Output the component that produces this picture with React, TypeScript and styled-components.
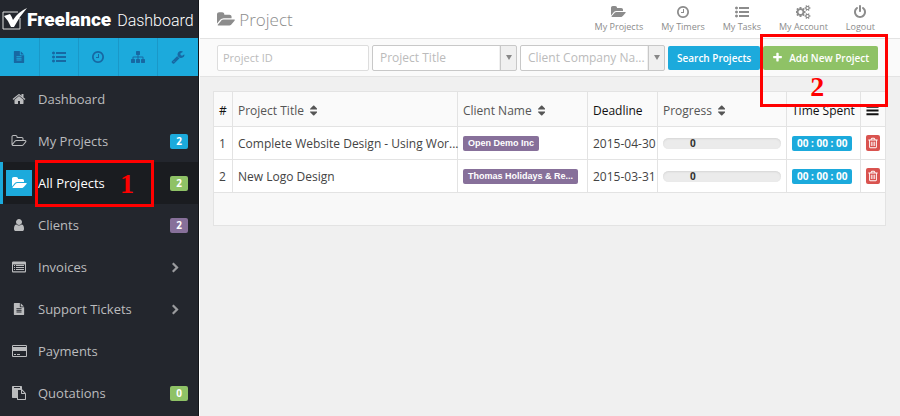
import React from "react";
import styled, { createGlobalStyle } from "styled-components";

const blue = "#1caadc";
const green = "#8fc266";
const purple = "#87709a";
const red = "#d9534f";

const GlobalStyle = createGlobalStyle`
  * { box-sizing: border-box; }
  body {
    margin: 0;
    background: #f0f0f0;
    font-family: "Open Sans", "Noto Sans", sans-serif;
    font-size: 13px;
    color: #444;
  }
  button, input, select { font-family: inherit; margin: 0; }
`;

/* ---------- icons ---------- */

const dot = (y: number) =>
  `M384 ${y}q0 80-56 136t-136 56-136-56-56-136 56-136 136-56 136 56 56 136z`;
const dash = (y: number) =>
  `M1792 ${y}v192q0 13-9.5 22.5t-22.5 9.5h-1216q-13 0-22.5-9.5t-9.5-22.5v-192q0-13 9.5-22.5t22.5-9.5h1216q13 0 22.5 9.5t9.5 22.5z`;
const fileLine = (y: number) =>
  `M1280 ${y}v-64q0-14-9-23t-23-9h-704q-14 0-23 9t-9 23v64q0 14 9 23t23 9h704q14 0 23-9t9-23z`;
const smallCog = (y: number) =>
  `M1600 ${y + 70}q0-52-38-90t-90-38-90 38-38 90q0 53 37.5 90.5t90.5 37.5 90.5-37.5 37.5-90.5zM1856 ${y}v140q0 16-149 31-12 27-30 52 51 113 51 138 0 4-4 7-122 71-124 71-8 0-46-47t-52-68q-20 2-30 2t-30-2q-14 21-52 68t-46 47q-2 0-124-71-4-3-4-7 0-25 51-138-18-25-30-52-149-15-149-31v-140q0-16 149-31 13-29 30-52-51-113-51-138 0-4 4-7 4-2 35-20t59-34 30-16q8 0 46 46.5t52 67.5q20-2 30-2t30 2q51-71 92-112l6-2q4 0 124 70 4 3 4 7 0 25-51 138 17 23 30 52 149 15 149 31z`;
const bin = (x: number) =>
  `M${x} 736v576q0 14-9 23t-23 9h-64q-14 0-23-9t-9-23v-576q0-14 9-23t23-9h64q14 0 23 9t9 23z`;

const icons = {
  file: {
    w: 1792,
    d:
      "M1596 476q14 14 28 36h-472v-472q22 14 36 28zM1120 640h544v1056q0 40-28 68t-68 28h-1344q-40 0-68-28t-28-68v-1600q0-40 28-68t68-28h800v544q0 40 28 68t68 28z" +
      fileLine(1376) + fileLine(1120) + fileLine(864),
  },
  list: { w: 1792, d: dot(1408) + dot(896) + dot(384) + dash(1312) + dash(800) + dash(288) },
  clock: {
    w: 1792,
    d: "M1024 544v448q0 14-9 23t-23 9h-320q-14 0-23-9t-9-23v-64q0-14 9-23t23-9h224v-352q0-14 9-23t23-9h64q14 0 23 9t9 23zm416 352q0-148-73-273t-198-198-273-73-273 73-198 198-73 273 73 273 198 198 273 73 273-73 198-198 73-273zm224 0q0 209-103 385.5t-279.5 279.5-385.5 103-385.5-103-279.5-279.5-103-385.5 103-385.5 279.5-279.5 385.5-103 385.5 103 279.5 279.5 103 385.5z",
  },
  sitemap: {
    w: 1792,
    d: "M1792 1248v320q0 40-28 68t-68 28h-320q-40 0-68-28t-28-68v-320q0-40 28-68t68-28h96v-192h-512v192h96q40 0 68 28t28 68v320q0 40-28 68t-68 28h-320q-40 0-68-28t-28-68v-320q0-40 28-68t68-28h96v-192h-512v192h96q40 0 68 28t28 68v320q0 40-28 68t-68 28h-320q-40 0-68-28t-28-68v-320q0-40 28-68t68-28h96v-192q0-52 38-90t90-38h512v-192h-96q-40 0-68-28t-28-68v-320q0-40 28-68t68-28h320q40 0 68 28t28 68v320q0 40-28 68t-68 28h-96v192h512q52 0 90 38t38 90v192h96q40 0 68 28t28 68z",
  },
  wrench: {
    w: 1792,
    d: "M448 1472q0-26-19-45t-45-19-45 19-19 45 19 45 45 19 45-19 19-45zm644-420l-682 682q-37 37-90 37-52 0-91-37l-106-108q-38-36-38-90 0-53 38-91l681-681q39 98 114.5 173.5t173.5 114.5zm634-435q0 39-23 106-47 134-164.5 217.5t-258.5 83.5q-185 0-316.5-131.5t-131.5-316.5 131.5-316.5 316.5-131.5q58 0 121.5 16.5t107.5 46.5q16 11 16 28t-16 28l-293 169v224l193 107q5-3 79-48.5t135.5-81 70.5-35.5q15 0 23.5 10t8.5 25z",
  },
  home: {
    w: 1792,
    d: "M1472 992v480q0 26-19 45t-45 19h-384v-384h-256v384h-384q-26 0-45-19t-19-45v-480q0-1 .5-3t.5-3l575-474 575 474q1 2 1 6zm223-69l-62 74q-8 9-21 11h-3q-13 0-21-7l-692-577-692 577q-12 8-24 7-13-2-21-11l-62-74q-8-10-7-23.5t11-21.5l719-599q32-26 76-26t76 26l244 204v-195q0-14 9-23t23-9h192q14 0 23 9t9 23v408l219 182q10 8 11 21.5t-7 23.5z",
  },
  folder: {
    w: 1920,
    d: "M1879 952q0 31-31 66l-336 396q-43 51-120.5 86.5t-143.5 35.5h-1088q-34 0-60.5-13t-26.5-43q0-31 31-66l336-396q43-51 120.5-86.5t143.5-35.5h1088q34 0 60.5 13t26.5 43zm-343-344v160h-832q-94 0-197 47.5t-164 119.5l-337 396-5 6q0-4-.5-12.5t-.5-12.5v-960q0-92 66-158t158-66h320q92 0 158 66t66 158v32h544q92 0 158 66t66 158z",
  },
  folderOutline: {
    w: 1984,
    d: "M1845 931q0-35-53-35h-1088q-40 0-85.5 21.5t-71.5 52.5l-294 363q-18 24-18 40 0 35 53 35h1088q40 0 86-22t71-53l294-363q18-22 18-39zm-1141-163h768v-160q0-40-28-68t-68-28h-576q-40 0-68-28t-28-68v-64q0-40-28-68t-68-28h-320q-40 0-68 28t-28 68v853l256-315q44-53 116-87.5t140-34.5zm1269 163q0 62-46 120l-295 363q-43 53-116 87.5t-140 34.5h-1088q-92 0-158-66t-66-158v-960q0-92 66-158t158-66h320q92 0 158 66t66 158v32h544q92 0 158 66t66 158v160h192q54 0 99 24.5t67 70.5q15 32 15 68z",
  },
  user: {
    w: 1792,
    d: "M1536 1399q0 109-62.5 187t-150.5 78h-854q-88 0-150.5-78t-62.5-187q0-85 8.5-160.5t31.5-152 58.5-131 94-89 134.5-34.5q131 128 313 128t313-128q76 0 134.5 34.5t94 89 58.5 131 31.5 152 8.5 160.5zm-256-887q0 159-112.5 271.5t-271.5 112.5-271.5-112.5-112.5-271.5 112.5-271.5 271.5-112.5 271.5 112.5 112.5 271.5z",
  },
  listBox: {
    w: 1792,
    d: "M160 192h1472q66 0 113 47t47 113v1088q0 66-47 113t-113 47h-1472q-66 0-113-47t-47-113v-1088q0-66 47-113t113-47zM128 576v832q0 32 32 32h1472q32 0 32-32v-832zM256 640h128v128h-128zM512 640h1024v128h-1024zM256 896h128v128h-128zM512 896h1024v128h-1024zM256 1152h128v128h-128zM512 1152h1024v128h-1024z",
  },
  card: {
    w: 1920,
    d: "M160 128h1600q66 0 113 47t47 113v1216q0 66-47 113t-113 47h-1600q-66 0-113-47t-47-113v-1216q0-66 47-113t113-47zM160 256q-32 0-32 32v96h1664v-96q0-32-32-32zM1760 1536q32 0 32-32v-608h-1664v608q0 32 32 32zM256 1408v-128h256v128h-256zM640 1408v-128h384v128h-384z",
  },
  paste: {
    w: 1792,
    d: "M768 1664h896v-640h-416q-40 0-68-28t-28-68v-416h-384v1152zm256-1440v-64q0-13-9.5-22.5t-22.5-9.5h-704q-13 0-22.5 9.5t-9.5 22.5v64q0 13 9.5 22.5t22.5 9.5h704q13 0 22.5-9.5t9.5-22.5zm256 672h299l-299-299v299zm512 128v672q0 40-28 68t-68 28h-960q-40 0-68-28t-28-68v-160h-544q-40 0-68-28t-28-68v-1344q0-40 28-68t68-28h1088q40 0 68 28t28 68v328q21 13 36 28l408 408q28 28 48 76t20 88z",
  },
  chevron: {
    w: 1792,
    d: "M1363 941l-742 742q-19 19-45 19t-45-19l-166-166q-19-19-19-45t19-45l531-531-531-531q-19-19-19-45t19-45l166-166q19-19 45-19t45 19l742 742q19 19 19 45t-19 45z",
  },
  cogs: {
    w: 1920,
    d:
      "M832 896q0-106-75-181t-181-75-181 75-75 181 75 181 181 75 181-75 75-181zM1216 805v185q0 10-7 19.5t-16 10.5l-155 24q-11 35-32 76 34 48 90 115 7 11 7 20 0 12-7 19-23 30-82.5 89.5t-78.5 59.5q-11 0-21-7l-115-90q-37 19-77 31-11 108-23 155-7 24-30 24h-186q-11 0-20-7.5t-10-17.5l-23-153q-34-10-75-31l-118 89q-7 7-20 7-11 0-21-8-144-133-144-160 0-9 7-19 10-14 41-53t47-61q-23-44-35-82l-152-24q-10-1-17-9.5t-7-19.5v-185q0-10 7-19.5t16-10.5l155-24q11-35 32-76-34-48-90-115-7-11-7-20 0-12 7-20 22-30 82-89t79-59q11 0 21 7l115 90q34-18 77-32 11-108 23-154 7-24 30-24h186q11 0 20 7.5t10 17.5l23 153q34 10 75 31l118-89q8-7 20-7 11 0 21 8 144 133 144 160 0 8-7 19-12 16-42 54t-45 60q23 48 34 82l152 23q10 2 17 10.5t7 19.5z" +
      smallCog(1338) + smallCog(314),
  },
  power: {
    w: 1792,
    d: "M1664 896q0 156-61 298t-164 245-245 164-298 61-298-61-245-164-164-245-61-298q0-182 80.5-343t226.5-270q43-32 95.5-25t83.5 50q32 42 24.5 94.5t-49.5 84.5q-98 74-151.5 181t-53.5 228q0 104 40.5 198.5t109.5 163.5 163.5 109.5 198.5 40.5 198.5-40.5 163.5-109.5 109.5-163.5 40.5-198.5q0-121-53.5-228t-151.5-181q-42-32-49.5-84.5t24.5-94.5q31-43 84-50t95 25q146 109 226.5 270t80.5 343zm-640-768v640q0 52-38 90t-90 38-90-38-38-90v-640q0-52 38-90t90-38 90 38 38 90z",
  },
  trash: {
    w: 1792,
    d:
      bin(704) + bin(960) + bin(1216) +
      "M1344 1460v-948h-896v948q0 22 7 40.5t14.5 27 10.5 8.5h832q3 0 10.5-8.5t14.5-27 7-40.5zM672 384h448l-48-117q-7-9-17-11h-317q-10 2-17 11zM1600 416v64q0 14-9 23t-23 9h-96v948q0 83-47 143.5t-113 60.5h-832q-66 0-113-58.5t-47-141.5v-952h-96q-14 0-23-9t-9-23v-64q0-14 9-23t23-9h309l70-167q15-37 54-63t79-26h320q40 0 79 26t54 63l70 167h309q14 0 23 9t9 23z",
  },
  plus: {
    w: 1792,
    d: "M1600 736v192q0 40-28 68t-68 28h-416v416q0 40-28 68t-68 28h-192q-40 0-68-28t-28-68v-416h-416q-40 0-68-28t-28-68v-192q0-40 28-68t68-28h416v-416q0-40 28-68t68-28h192q40 0 68 28t28 68v416h416q40 0 68 28t28 68z",
  },
  bars: { w: 1792, d: "M64 256h1664v256h-1664zM64 768h1664v256h-1664zM64 1280h1664v256h-1664z" },
  sort: {
    w: 1024,
    d: "M1024 1088q0 26-19 45l-448 448q-19 19-45 19t-45-19l-448-448q-19-19-19-45t19-45 45-19h896q26 0 45 19t19 45zm0-384q0 26-19 45t-45 19h-896q-26 0-45-19t-19-45 19-45l448-448q19-19 45-19t45 19l448 448q19 19 19 45z",
  },
};

type IconName = keyof typeof icons;

const Svg = styled.svg<{ $size: number }>`
  display: block;
  flex: none;
  height: ${(p) => p.$size}px;
  fill: currentColor;
  fill-rule: evenodd;
`;

const Icon = ({ name, size = 14 }: { name: IconName; size?: number }) => (
  <Svg $size={size} viewBox={`0 0 ${icons[name].w} 1792`} aria-hidden="true">
    <path d={icons[name].d} />
  </Svg>
);

/* ---------- layout ---------- */

const Page = styled.div`
  display: grid;
  grid-template-columns: 200px minmax(0, 1fr);
  min-height: 100vh;
`;

const Sidebar = styled.aside`
  background: #23262d;
  border-right: 1px solid #fff;
  box-shadow: inset -1px 0 #14161a;
`;

const Logo = styled.a`
  display: flex;
  align-items: center;
  height: 38px;
  padding-left: 1px;
  color: #fff;
  text-decoration: none;
  white-space: nowrap;
`;

const LogoMark = styled.svg`
  flex: none;
  width: 26px;
  height: 24px;
`;

const LogoText = styled.span`
  display: flex;
  align-items: baseline;
  gap: 6px;
  font-family: Roboto, "Liberation Sans", sans-serif;
  font-size: 16px;
`;

const LogoBold = styled.strong`
  font-size: 19px;
  font-weight: 900;
`;

const LogoLight = styled.span`
  font-weight: 300;
`;

const QuickBar = styled.nav`
  display: grid;
  grid-template-columns: repeat(5, 1fr);
  height: 38px;
  margin-right: 1px;
  background: ${blue};
`;

const QuickLink = styled.a`
  display: flex;
  align-items: center;
  justify-content: center;
  color: #1768a3;
  border-right: 1px solid #1a98c8;
  &:last-child { border-right: 0; }
`;

const NavList = styled.ul`
  list-style: none;
  margin: 0;
  padding: 2px 0 0;
`;

const NavItem = styled.li`
  position: relative;
`;

const NavLink = styled.a<{ $active?: boolean }>`
  display: flex;
  align-items: center;
  height: 42px;
  padding: 0 10px 0 3px;
  gap: 6px;
  border-left: 3px solid ${(p) => (p.$active ? blue : "transparent")};
  background: ${(p) => (p.$active ? "#1a1c20" : "transparent")};
  color: ${(p) => (p.$active ? "#fff" : "#bbbcbe")};
  text-decoration: none;
  margin-right: 1px;
`;

const NavIcon = styled.span<{ $active?: boolean }>`
  display: flex;
  align-items: center;
  justify-content: center;
  width: 26px;
  height: 26px;
  background: ${(p) => (p.$active ? blue : "transparent")};
`;

const NavText = styled.span`
  flex: 1;
`;

const NavBadge = styled.span<{ $color: string }>`
  width: 18px;
  border-radius: 2px;
  background: ${(p) => p.$color};
  color: #fff;
  font-size: 10px;
  font-weight: 700;
  line-height: 15px;
  text-align: center;
`;

const NavArrow = styled.span`
  width: 18px;
  color: #9a9b9e;
`;

const Main = styled.main`
  min-width: 0;
`;

const Header = styled.header`
  display: flex;
  align-items: center;
  justify-content: space-between;
  height: 38px;
  padding: 0 25px 0 17px;
  background: #fff;
`;

const Title = styled.h1`
  display: flex;
  align-items: center;
  gap: 4px;
  margin: 0;
  color: #8c8c8c;
  font-size: 17px;
  font-weight: 300;
`;

const TopNav = styled.nav`
  display: flex;
  gap: 18px;
`;

const TopLink = styled.a`
  display: flex;
  flex-direction: column;
  align-items: center;
  gap: 1px;
  color: #8c8c8c;
  text-decoration: none;
  font-size: 9px;
  line-height: 14px;
`;

const Filters = styled.form`
  display: flex;
  align-items: center;
  gap: 3px;
  height: 39px;
  padding: 0 17px;
  background: #fafafa;
  border: solid #e3e3e3;
  border-width: 1px 0;
`;

const TextField = styled.input`
  flex: 0 1 152px;
  min-width: 0;
  height: 26px;
  padding: 0 5px;
  border: 1px solid #ddd;
  border-radius: 2px;
  background: #fff;
  color: #444;
  font-size: 11px;
  &::placeholder { color: #bbb; }
`;

const SelectBox = styled.span`
  display: flex;
  flex: 0 1 145px;
  min-width: 0;
  height: 26px;
  border: 1px solid #c8c8c8;
  border-radius: 2px;
  background: linear-gradient(90deg, #fff calc(100% - 17px), #f0f0f0 calc(100% - 17px));
`;

const Select = styled.select`
  flex: 1;
  min-width: 0;
  padding: 0 0 0 7px;
  border: 0;
  appearance: none;
  background: transparent;
  color: #bbb;
  font-size: 12px;
`;

const SelectArrow = styled.span`
  display: flex;
  align-items: center;
  justify-content: center;
  width: 16px;
  border-left: 1px solid #c8c8c8;
  pointer-events: none;
  &::after {
    content: "";
    border: 3px solid transparent;
    border-top: 5px solid #888;
    border-bottom: 0;
  }
`;

const Button = styled.button<{ $color: string }>`
  display: flex;
  flex: none;
  align-items: center;
  gap: 6px;
  height: 24px;
  padding: 0 9px;
  border: 0;
  border-radius: 2px;
  background: ${(p) => p.$color};
  color: #fff;
  font-size: 10px;
  font-weight: 600;
  white-space: nowrap;
`;

const AddWrap = styled.div`
  position: relative;
`;

const Marker = styled.div<{ $box: "side" | "action" }>`
  position: absolute;
  z-index: 2;
  top: ${(p) => (p.$box === "side" ? -2 : -12)}px;
  left: ${(p) => (p.$box === "side" ? 35 : -3)}px;
  width: ${(p) => (p.$box === "side" ? 119 : 128)}px;
  height: ${(p) => (p.$box === "side" ? 47 : 73)}px;
  padding: ${(p) => (p.$box === "side" ? "5px 0 0 82px" : "34px 0 0 47px")};
  border: 3px solid #f00;
  color: #f00;
  font-family: "Liberation Serif", serif;
  font-size: 28px;
  font-weight: 700;
  line-height: 32px;
  pointer-events: none;
`;

/* ---------- table ---------- */

const TableWrap = styled.section`
  padding: 14px 14px 0 13px;
`;

const Table = styled.table`
  width: 100%;
  table-layout: fixed;
  border-collapse: collapse;
  background: #fff;
  font-size: 12px;
`;

const Col = styled.col<{ $w?: number }>`
  width: ${(p) => (p.$w ? `${p.$w}px` : "auto")};
`;

const Th = styled.th<{ $sortable?: boolean }>`
  height: 35px;
  padding: 2px 5px 0;
  border: 1px solid #e3e3e3;
  background: #fafafa;
  color: ${(p) => (p.$sortable ? "#555" : "#111")};
  font-weight: 400;
  text-align: left;
  white-space: nowrap;
`;

const SortButton = styled.button`
  display: flex;
  align-items: center;
  gap: 6px;
  padding: 0;
  border: 0;
  background: none;
  color: inherit;
  font-size: 12px;
`;

const Td = styled.td`
  height: 33px;
  padding: 0 5px;
  border: 1px solid #e3e3e3;
  white-space: nowrap;
`;

const FootCell = styled.td`
  height: 33px;
  border: 1px solid #e3e3e3;
  background: #f8f8f8;
`;

const Tag = styled.span<{ $color: string; $time?: boolean }>`
  display: block;
  width: fit-content;
  padding: 0 5px;
  border-radius: 2px;
  background: ${(p) => p.$color};
  color: #fff;
  font-family: ${(p) => (p.$time ? "inherit" : '"Liberation Sans", sans-serif')};
  font-size: ${(p) => (p.$time ? 10 : 9)}px;
  font-weight: 700;
  line-height: 15px;
`;

const Track = styled.div`
  display: flex;
  align-items: center;
  height: 11px;
  padding-left: 27px;
  border-radius: 6px;
  background: #ebebeb;
  box-shadow: inset 0 1px 2px #d6d6d6;
  color: #333;
  font-size: 10px;
  font-weight: 700;
`;

const DeleteButton = styled.button`
  display: flex;
  align-items: center;
  justify-content: center;
  width: 14px;
  height: 16px;
  padding: 0;
  border: 0;
  border-radius: 2px;
  background: ${red};
  color: #fff;
`;

/* ---------- data ---------- */

type Nav = { icon: IconName; label: string; badge?: [string, string]; arrow?: boolean; active?: boolean };

const nav: Nav[] = [
  { icon: "home", label: "Dashboard" },
  { icon: "folderOutline", label: "My Projects", badge: ["2", blue] },
  { icon: "folder", label: "All Projects", badge: ["2", green], active: true },
  { icon: "user", label: "Clients", badge: ["2", purple] },
  { icon: "listBox", label: "Invoices", arrow: true },
  { icon: "file", label: "Support Tickets", arrow: true },
  { icon: "card", label: "Payments" },
  { icon: "paste", label: "Quotations", badge: ["0", green] },
];

const quick: [IconName, string][] = [
  ["file", "Documents"],
  ["list", "Tasks"],
  ["clock", "Timers"],
  ["sitemap", "Structure"],
  ["wrench", "Settings"],
];

const top: [IconName, string][] = [
  ["folder", "My Projects"],
  ["clock", "My Timers"],
  ["list", "My Tasks"],
  ["cogs", "My Account"],
  ["power", "Logout"],
];

const projects = [
  { id: 1, title: "Complete Website Design - Using Wor...", client: "Open Demo Inc", deadline: "2015-04-30" },
  { id: 2, title: "New Logo Design", client: "Thomas Holidays & Re...", deadline: "2015-03-31" },
];

const SortHead = ({ label }: { label: string }) => (
  <Th $sortable scope="col">
    <SortButton type="button">
      {label}
      <Icon name="sort" size={13} />
    </SortButton>
  </Th>
);

export default function App() {
  return (
    <Page>
      <GlobalStyle />
      <Sidebar>
        <Logo href="#">
          <LogoMark viewBox="0 0 26 24" aria-hidden="true">
            <path d="M17 5H2v17h17V11" fill="none" stroke="#ddd" strokeWidth="1" />
            <path d="M3 9l6-2q2 3 3 6Q17 5 26 1 18 10 13 20h-3Q7 13 3 9z" fill="#fff" />
          </LogoMark>
          <LogoText>
            <LogoBold>Freelance</LogoBold>
            <LogoLight>Dashboard</LogoLight>
          </LogoText>
        </Logo>
        <QuickBar>
          {quick.map(([icon, label]) => (
            <QuickLink key={icon} href="#" aria-label={label}>
              <Icon name={icon} size={icon === "file" ? 12 : 14} />
            </QuickLink>
          ))}
        </QuickBar>
        <NavList>
          {nav.map((n) => (
            <NavItem key={n.label}>
              <NavLink href="#" $active={n.active}>
                <NavIcon $active={n.active}>
                  <Icon name={n.icon} size={n.icon === "file" ? 12 : 14} />
                </NavIcon>
                <NavText>{n.label}</NavText>
                {n.badge && <NavBadge $color={n.badge[1]}>{n.badge[0]}</NavBadge>}
                {n.arrow && (
                  <NavArrow>
                    <Icon name="chevron" size={11} />
                  </NavArrow>
                )}
              </NavLink>
              {n.active && <Marker $box="side">1</Marker>}
            </NavItem>
          ))}
        </NavList>
      </Sidebar>
      <Main>
        <Header>
          <Title>
            <Icon name="folder" size={17} />
            Project
          </Title>
          <TopNav>
            {top.map(([icon, label]) => (
              <TopLink key={label} href="#">
                <Icon name={icon} />
                {label}
              </TopLink>
            ))}
          </TopNav>
        </Header>
        <Filters onSubmit={(e) => e.preventDefault()}>
          <TextField placeholder="Project ID" aria-label="Project ID" />
          <SelectBox>
            <Select aria-label="Project Title">
              <option>Project Title</option>
            </Select>
            <SelectArrow />
          </SelectBox>
          <SelectBox>
            <Select aria-label="Client Company Name">
              <option>Client Company Na...</option>
            </Select>
            <SelectArrow />
          </SelectBox>
          <Button $color={blue} type="submit">Search Projects</Button>
          <AddWrap>
            <Button $color={green} type="button">
              <Icon name="plus" size={11} />
              Add New Project
            </Button>
            <Marker $box="action">2</Marker>
          </AddWrap>
        </Filters>
        <TableWrap>
          <Table>
            <colgroup>
              <Col $w={19} />
              <Col />
              <Col $w={130} />
              <Col $w={70} />
              <Col $w={129} />
              <Col $w={74} />
              <Col $w={25} />
            </colgroup>
            <thead>
              <tr>
                <Th scope="col">#</Th>
                <SortHead label="Project Title" />
                <SortHead label="Client Name" />
                <Th scope="col">Deadline</Th>
                <SortHead label="Progress" />
                <Th scope="col">Time Spent</Th>
                <Th scope="col" aria-label="Actions">
                  <Icon name="bars" size={13} />
                </Th>
              </tr>
            </thead>
            <tbody>
              {projects.map((p) => (
                <tr key={p.id}>
                  <Td>{p.id}</Td>
                  <Td>{p.title}</Td>
                  <Td>
                    <Tag $color={purple}>{p.client}</Tag>
                  </Td>
                  <Td>{p.deadline}</Td>
                  <Td>
                    <Track>0</Track>
                  </Td>
                  <Td>
                    <Tag $color={blue} $time>00 : 00 : 00</Tag>
                  </Td>
                  <Td>
                    <DeleteButton type="button" aria-label={`Delete ${p.title}`}>
                      <Icon name="trash" size={12} />
                    </DeleteButton>
                  </Td>
                </tr>
              ))}
            </tbody>
            <tfoot>
              <tr>
                <FootCell colSpan={7} />
              </tr>
            </tfoot>
          </Table>
        </TableWrap>
      </Main>
    </Page>
  );
}
